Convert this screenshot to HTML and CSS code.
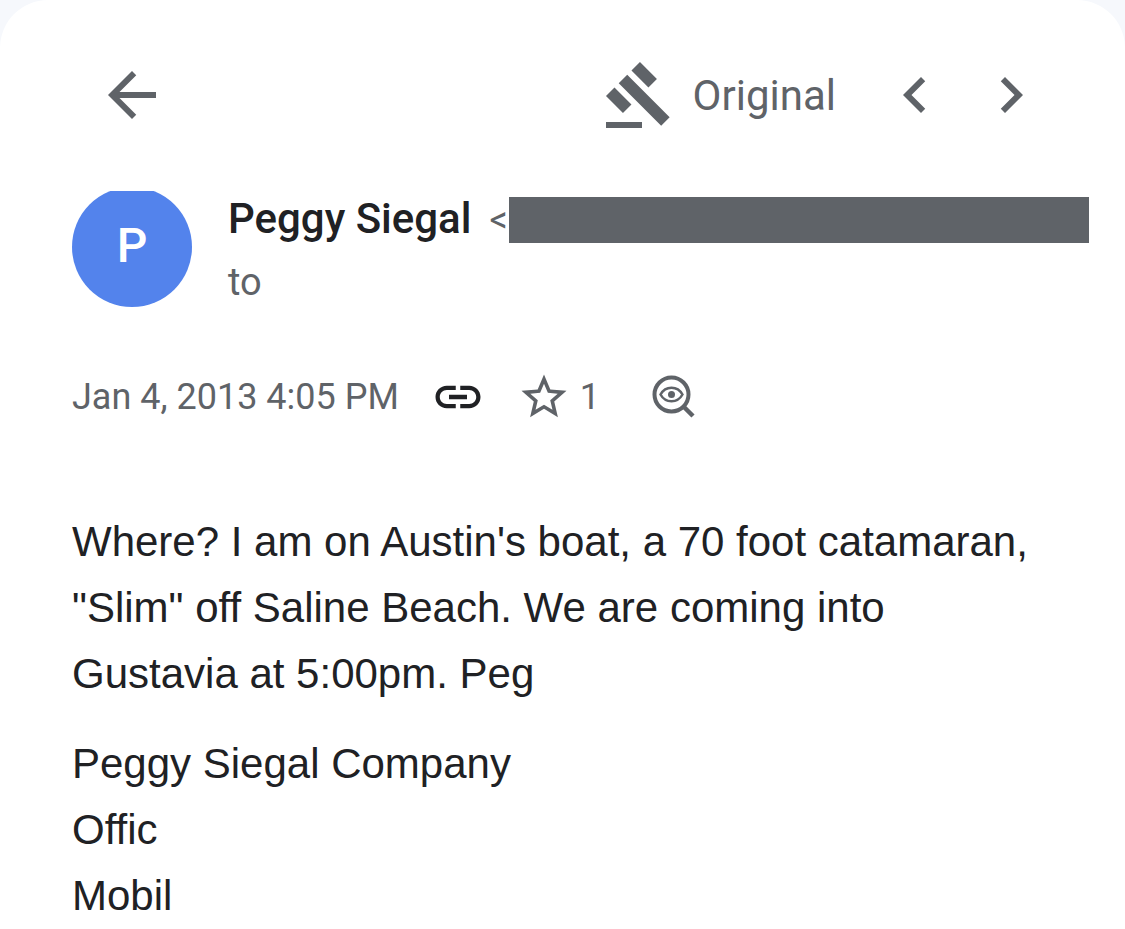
FILE: index.html
```html
<!DOCTYPE html>
<html lang="en">
<head>
  <meta charset="UTF-8">
  <meta name="viewport" content="width=device-width, initial-scale=1.0">
  <title>Peggy Siegal</title>
  <link rel="stylesheet" href="styles.css">
</head>
<body>
  <main class="card">
    <!-- Toolbar -->
    <header class="toolbar">
      <button class="icon-button" aria-label="Back">
        <svg viewBox="0 0 24 24"><path d="M20 11H7.83l5.59-5.59L12 4l-8 8 8 8 1.41-1.41L7.83 13H20v-2z"/></svg>
      </button>
      <button class="original-button">
        <svg viewBox="0 0 24 24"><path d="M1 21h12v2H1zM5.245 8.07l2.83-2.827 14.14 14.142-2.828 2.828zM12.317 1l5.657 5.656-2.83 2.83-5.654-5.66zM3.825 9.485l5.657 5.657-2.828 2.828-5.657-5.657z"/></svg>
        <span>Original</span>
      </button>
      <nav class="pager">
        <button class="icon-button" aria-label="Previous">
          <svg viewBox="0 0 24 24"><path d="M15.41 7.41L14 6l-6 6 6 6 1.41-1.41L10.83 12z"/></svg>
        </button>
        <button class="icon-button" aria-label="Next">
          <svg viewBox="0 0 24 24"><path d="M10 6L8.59 7.41 13.17 12l-4.58 4.59L10 18l6-6z"/></svg>
        </button>
      </nav>
    </header>

    <!-- Sender -->
    <section class="sender">
      <div class="avatar"><div class="avatar-circle">P</div></div>
      <div class="sender-info">
        <div class="sender-line">
          <h1 class="sender-name">Peggy Siegal</h1>
          <span class="sender-bracket">&lt;</span>
          <span class="redacted"></span>
        </div>
        <div class="recipient">to</div>
      </div>
    </section>

    <!-- Date and actions -->
    <section class="meta">
      <time datetime="2013-01-04T16:05">Jan 4, 2013 4:05 PM</time>
      <button class="meta-button link-button" aria-label="Copy link">
        <svg viewBox="0 0 24 24"><path d="M3.9 12c0-1.71 1.39-3.1 3.1-3.1h4V7H7c-2.76 0-5 2.24-5 5s2.24 5 5 5h4v-1.9H7c-1.71 0-3.1-1.39-3.1-3.1zM8 13h8v-2H8v2zm9-6h-4v1.9h4c1.71 0 3.1 1.39 3.1 3.1s-1.39 3.1-3.1 3.1h-4V17h4c2.76 0 5-2.24 5-5s-2.24-5-5-5z"/></svg>
      </button>
      <button class="meta-button star-button" aria-label="Star">
        <svg viewBox="0 0 24 24"><path d="M22 9.24l-7.19-.62L12 2 9.19 8.63 2 9.24l5.46 4.73L5.82 21 12 17.27 18.18 21l-1.63-7.03L22 9.24zM12 15.4l-3.76 2.27 1-4.28-3.32-2.88 4.38-.38L12 6.1l1.71 4.04 4.38.38-3.32 2.88 1 4.28L12 15.4z"/></svg>
        <span class="star-count">1</span>
      </button>
      <button class="meta-button" aria-label="Inspect">
        <svg class="inspect" viewBox="0 0 54 54">
          <circle cx="24.5" cy="24.5" r="17" stroke-width="4"/>
          <path d="M36.5 36.5L46 46" stroke-width="4.5"/>
          <path d="M13.5 24.5C18.5 15.5 30.5 15.5 35.5 24.5C30.5 33.5 18.5 33.5 13.5 24.5z" stroke-width="2.5"/>
          <circle class="pupil" cx="24.5" cy="24.5" r="3.5"/>
        </svg>
      </button>
    </section>

    <!-- Message -->
    <article class="message">
      <p>Where? I am on Austin's boat, a 70 foot catamaran,<br>"Slim" off Saline Beach. We are coming into<br>Gustavia at 5:00pm. Peg</p>
      <p>Peggy Siegal Company<br>Offic<br>Mobil</p>
    </article>
  </main>
</body>
</html>
```

FILE: styles.css
```css
* {
  box-sizing: border-box;
}

body {
  margin: 0;
  background-color: #f6f8fc;
  font-family: Roboto, Arial, sans-serif;
  color: #5f6368;
}

.card {
  min-height: 100vh;
  padding: 59px 36px 0 72px;
  background-color: #fff;
  border-radius: 48px 48px 0 0;
}

button {
  display: flex;
  align-items: center;
  padding: 0;
  border: none;
  background: none;
  color: inherit;
  font: inherit;
  cursor: pointer;
}

svg {
  display: block;
  width: 72px;
  height: 72px;
  fill: currentColor;
}

.toolbar {
  display: flex;
  align-items: center;
  padding: 0 42px 0 24px;
}

.original-button {
  gap: 18px;
  margin-left: auto;
  font-size: 42px;
}

.pager {
  display: flex;
  gap: 24px;
  margin-left: 43px;
}

.sender {
  display: flex;
  gap: 36px;
  margin-top: 60px;
}

/* the top edge of the circle is cut off */
.avatar {
  display: flex;
  align-items: flex-end;
  width: 120px;
  height: 116px;
  overflow: hidden;
}

.avatar-circle {
  flex: none;
  width: 120px;
  height: 120px;
  border-radius: 50%;
  background-color: #5383ec;
  color: #fff;
  font-size: 48px;
  font-weight: 500;
  line-height: 118px;
  text-align: center;
}

.sender-info {
  flex: 1;
  min-width: 0;
}

.sender-line {
  display: flex;
  align-items: center;
  height: 58px;
}

.sender-name {
  margin: 0 18px 0 0;
  padding-bottom: 2px;
  color: #202124;
  font-size: 42px;
  font-weight: 500;
  line-height: 54px;
}

.sender-bracket {
  margin-right: 1px;
  font-size: 36px;
}

.redacted {
  flex: 1;
  height: 46px;
  background-color: #5f6368;
}

.recipient {
  margin-top: 9px;
  font-size: 38px;
  line-height: 48px;
}

.meta {
  display: flex;
  align-items: center;
  margin-top: 63px;
  font-size: 36px;
}

.meta-button svg {
  width: 54px;
  height: 54px;
}

.link-button {
  margin: 0 32px;
  color: #202124;
}

.star-button {
  gap: 9px;
  margin-right: 47px;
}

.inspect {
  fill: none;
  stroke: currentColor;
}

.inspect .pupil {
  fill: currentColor;
  stroke: none;
}

.message {
  margin-top: 85px;
  color: #202124;
  font-family: "Liberation Sans", Arial, sans-serif;
  font-size: 42px;
  line-height: 66px;
}

.message p {
  margin: 0 0 24px;
}

.message p:last-child {
  margin-bottom: 0;
}
```
